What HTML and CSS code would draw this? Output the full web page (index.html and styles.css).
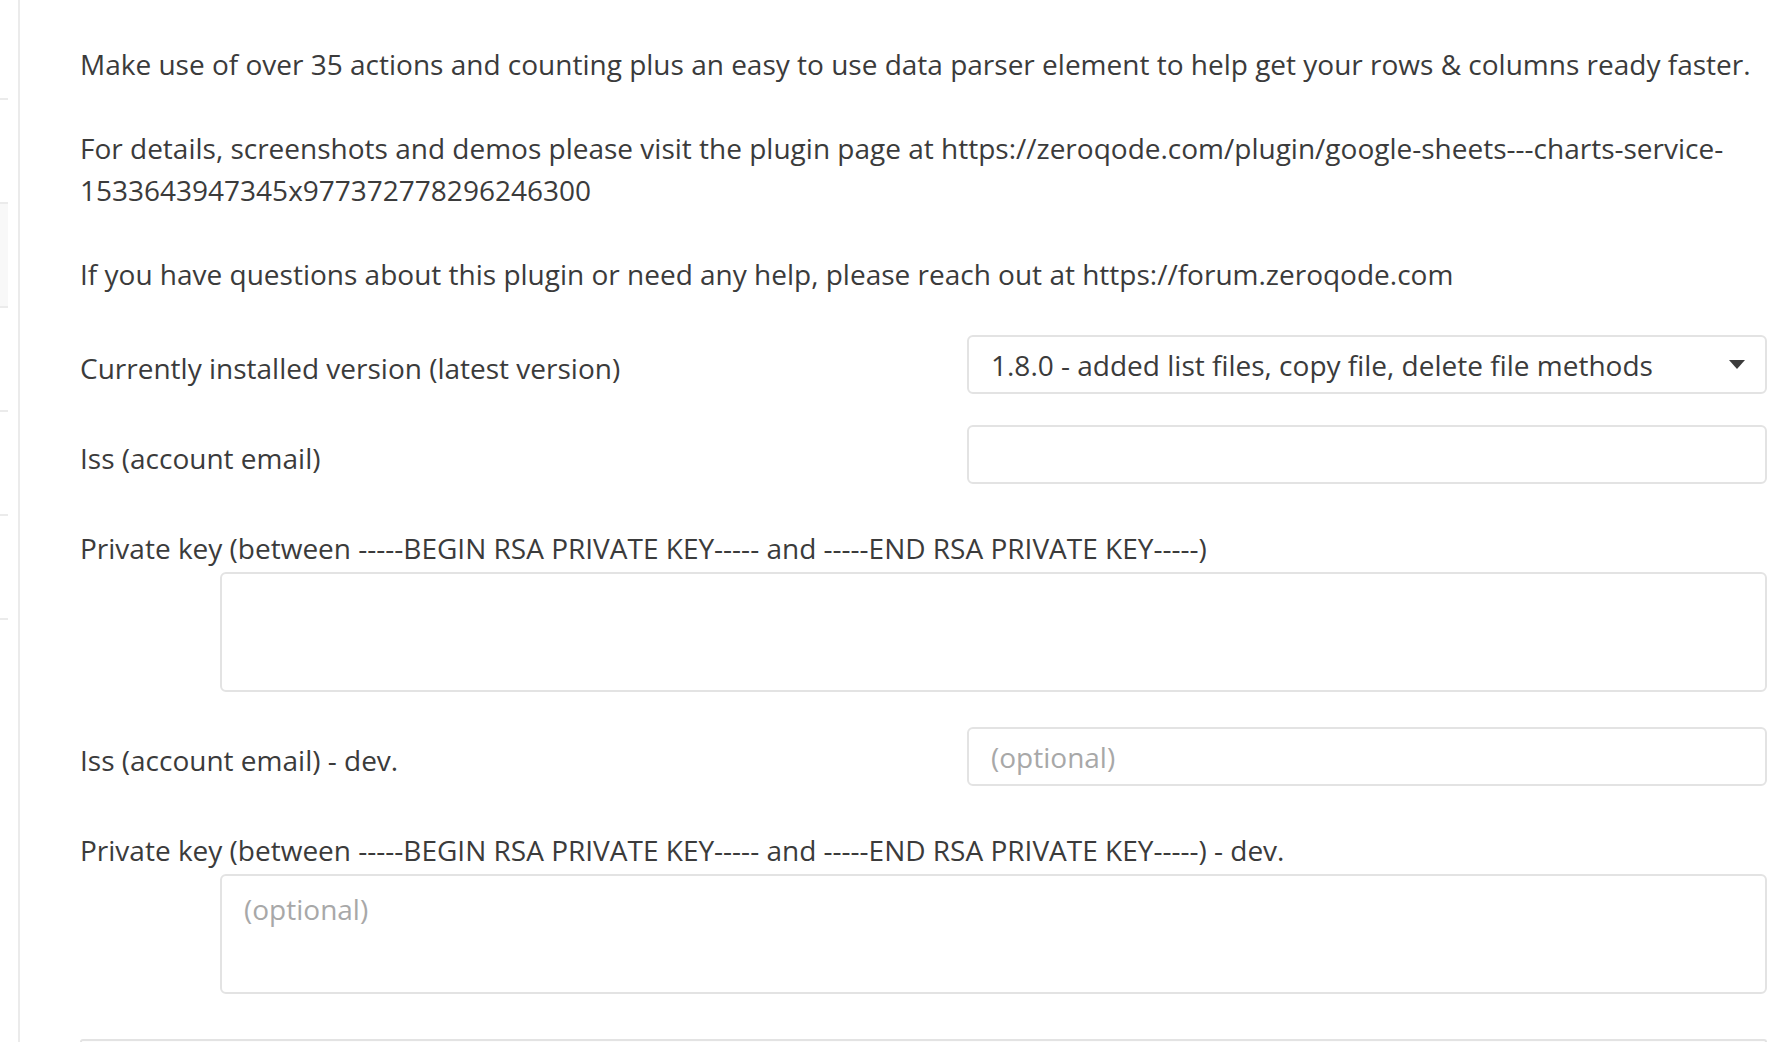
FILE: index.html
```html
<!DOCTYPE html>
<html lang="en">
<head>
<meta charset="utf-8">
<title>Plugin settings</title>
<link rel="stylesheet" href="styles.css">
</head>
<body>
<div class="page">
  <aside class="sidebar">
    <div class="side-row"></div>
    <div class="side-row active"></div>
    <div class="side-row"></div>
    <div class="side-row"></div>
    <div class="side-row"></div>
    <div class="side-row last"></div>
  </aside>
  <main class="panel">
    <p class="para">Make use of over 35 actions and counting plus an easy to use data parser element to help get your rows &amp; columns ready faster.</p>
    <p class="para">For details, screenshots and demos please visit the plugin page at https://zeroqode.com/plugin/google-sheets---charts-service-1533643947345x977372778296246300</p>
    <p class="para">If you have questions about this plugin or need any help, please reach out at https://forum.zeroqode.com</p>

    <div class="field-row first">
      <label class="label">Currently installed version (latest version)</label>
      <div class="select">
        <span class="select-text">1.8.0 - added list files, copy file, delete file methods</span>
        <span class="caret"></span>
      </div>
    </div>

    <div class="field-row">
      <label class="label">Iss (account email)</label>
      <input class="input" type="text">
    </div>

    <div class="field-block">
      <label class="label block-label">Private key (between -----BEGIN RSA PRIVATE KEY----- and -----END RSA PRIVATE KEY-----)</label>
      <textarea class="textarea"></textarea>
    </div>

    <div class="field-row">
      <label class="label">Iss (account email) - dev.</label>
      <input class="input" type="text" placeholder="(optional)">
    </div>

    <div class="field-block">
      <label class="label block-label">Private key (between -----BEGIN RSA PRIVATE KEY----- and -----END RSA PRIVATE KEY-----) - dev.</label>
      <textarea class="textarea" placeholder="(optional)"></textarea>
    </div>

    <div class="next-box"></div>
  </main>
</div>
</body>
</html>
```

FILE: styles.css
```css
html, body {
  margin: 0;
  padding: 0;
  background: #ffffff;
  height: 100%;
  overflow: hidden;
}

body {
  font-family: "Open Sans", "Liberation Sans", sans-serif;
  font-size: 28px;
  line-height: 42px;
  color: #3b3b3b;
}

.page {
  display: flex;
  height: 1042px;
}

.sidebar {
  width: 8px;
  flex: none;
  padding-top: 98px;
  margin-right: 10px;
}

.side-row {
  height: 102px;
  border-top: 2px solid #ebebeb;
}

.side-row.active {
  background: #f8f8f8;
}

.panel {
  flex: 1;
  border-left: 2px solid #ebebeb;
  padding: 43px 21px 0 60px;
  display: flex;
  flex-direction: column;
}

.para {
  margin: 0 0 42px 0;
}

.field-row {
  display: flex;
  align-items: center;
  justify-content: space-between;
  margin-bottom: 31px;
}

.field-row.first {
  margin-top: -2px;
}

.label {
  padding-top: 6px;
}

.select,
.input {
  box-sizing: border-box;
  width: 800px;
  height: 59px;
  border: 2px solid #e3e3e3;
  border-radius: 6px;
  background: #fff;
  font-family: inherit;
  font-size: 28px;
  color: #3b3b3b;
  padding: 0 22px;
  outline: none;
}

.select {
  display: flex;
  align-items: center;
  justify-content: space-between;
  padding-right: 20px;
}

.select-text {
  line-height: 42px;
}

.caret {
  width: 0;
  height: 0;
  border-left: 8px solid transparent;
  border-right: 8px solid transparent;
  border-top: 9px solid #3b3b3b;
}

.input::placeholder,
.textarea::placeholder {
  color: #a8a8a8;
  opacity: 1;
}

.field-block {
  display: flex;
  flex-direction: column;
  margin-top: 12px;
  margin-bottom: 35px;
}

.block-label {
  padding-top: 0;
  margin-bottom: 3px;
}

.textarea {
  box-sizing: border-box;
  margin-left: 140px;
  height: 120px;
  border: 2px solid #e3e3e3;
  border-radius: 6px;
  background: #fff;
  font-family: inherit;
  font-size: 28px;
  line-height: 42px;
  color: #3b3b3b;
  padding: 12px 22px;
  resize: none;
  outline: none;
}

.next-box {
  margin-top: 10px;
  height: 40px;
  border: 2px solid #e3e3e3;
  border-bottom: none;
  border-radius: 3px 3px 0 0;
  background: #fcfcfc;
}
```
